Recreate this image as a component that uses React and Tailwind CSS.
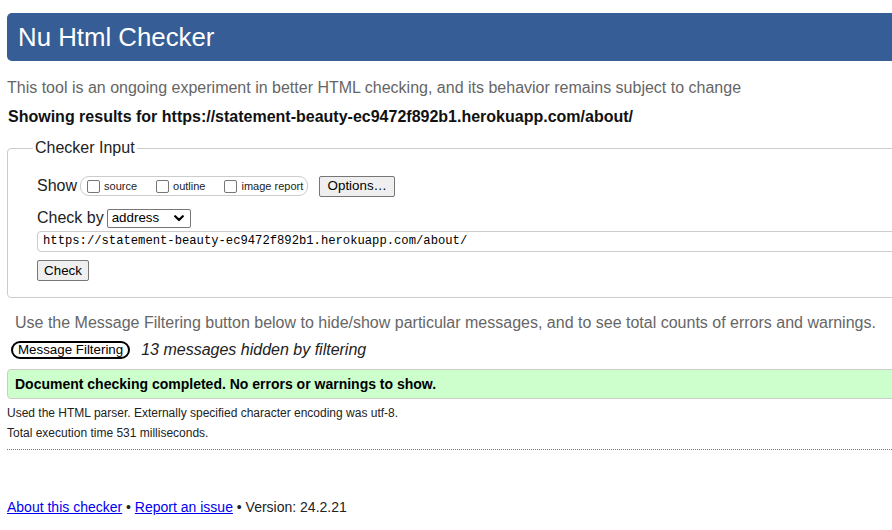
import React from "react";

/* -------------------------------------------------------------------------- */
/*  Small form pieces, drawn by hand so they look like the browser defaults   */
/* -------------------------------------------------------------------------- */

function Box() {
  return (
    <span className="inline-block h-[13px] w-[13px] shrink-0 rounded-[2px] border border-[#767676] bg-white" />
  );
}

function ShowOption({ label, last = false }) {
  return (
    <label className={`flex items-center ${last ? "" : "mr-[19px]"}`}>
      <Box />
      <span className="ml-[4px] text-[11px] leading-[13px] text-[#222]">{label}</span>
    </label>
  );
}

function NativeButton({ children, className = "" }) {
  return (
    <button
      type="button"
      className={`flex items-center justify-center rounded-[2px] border border-[#767676] bg-[#efefef] text-[13.33px] text-black ${className}`}
    >
      {children}
    </button>
  );
}

function Chevron() {
  return (
    <svg width="10" height="7" viewBox="0 0 10 7" fill="none">
      <path d="M1.2 1.2 5 5 8.8 1.2" stroke="#000" strokeWidth="2.2" strokeLinecap="round" strokeLinejoin="round" />
    </svg>
  );
}

/* -------------------------------------------------------------------------- */
/*  App                                                                       */
/* -------------------------------------------------------------------------- */

export default function App() {
  return (
    <div className="h-[530px] w-[892px] overflow-hidden bg-white">
      <div
        className="w-[1000px] pl-[7px] pt-[13px] text-[#222]"
        style={{ fontFamily: '"Liberation Sans", Arial, sans-serif' }}
      >
        {/* Header bar */}
        <header className="flex h-[48px] items-center rounded-l-[5px] bg-[#365d95] pl-[11px]">
          <h1 className="text-[25.8px] leading-[30px] font-normal text-white">Nu Html Checker</h1>
        </header>

        <p className="mt-[17px] text-[16px] leading-[20px] text-[#666]">
          This tool is an ongoing experiment in better HTML checking, and its behavior remains subject to change
        </p>

        <p className="mt-[9px] pl-[1px] text-[16px] leading-[20px] font-bold text-[#111]">
          Showing results for https://statement-beauty-ec9472f892b1.herokuapp.com/about/
        </p>

        {/* Checker input */}
        <fieldset className="mt-[11px] rounded-l-[4px] border border-[#ccc] pb-[16px] pl-[29px]">
          <legend className="-ml-[4px] px-[2px] text-[16px] leading-[20px] text-[#222]">Checker Input</legend>

          <div className="pt-[17px]">
            <div className="flex h-[22px] items-center">
              <span className="text-[16px] leading-[20px]">Show</span>
              <div className="ml-[3px] flex h-[20px] items-center rounded-[9px] border border-[#ccc] pl-[6px] pr-[4px]">
                <ShowOption label="source" />
                <ShowOption label="outline" />
                <ShowOption label="image report" last />
              </div>
              <NativeButton className="ml-[11px] h-[21px] w-[76px]">Options…</NativeButton>
            </div>

            <div className="mt-[11px] flex h-[20px] items-center">
              <span className="text-[16px] leading-[20px]">Check by</span>
              <div className="ml-[3px] flex h-[19px] w-[84px] items-center justify-between rounded-[2px] border border-[#767676] bg-white pl-[4px] pr-[6px] text-[13.33px] text-black">
                <span>address</span>
                <Chevron />
              </div>
            </div>

            <div
              className="mt-[3px] flex h-[21px] items-center rounded-l-[4px] border border-[#ccc] pl-[5px] text-[12.2px] text-black"
              style={{ fontFamily: '"Liberation Mono", "DejaVu Sans Mono", monospace' }}
            >
              https://statement-beauty-ec9472f892b1.herokuapp.com/about/
            </div>

            <NativeButton className="mt-[8px] h-[21px] w-[52px]">Check</NativeButton>
          </div>
        </fieldset>

        <p className="mt-[15px] pl-[8px] text-[16px] leading-[20px] text-[#666]">
          Use the Message Filtering button below to hide/show particular messages, and to see total counts of errors and warnings.
        </p>

        <div className="mt-[7px] flex h-[20px] items-center">
          <button
            type="button"
            className="ml-[4px] flex h-[18px] items-center rounded-full border-2 border-black px-[5px] text-[13.33px] leading-[14px] text-black"
          >
            Message Filtering
          </button>
          <span className="ml-[11px] text-[16px] leading-[20px] italic text-[#222]">
            13 messages hidden by filtering
          </span>
        </div>

        {/* Result banner */}
        <div className="mt-[9px] flex h-[30px] items-center rounded-l-[4px] border border-[#ccc] bg-[#ccffcc] pl-[7px]">
          <span className="text-[14px] font-bold text-black">
            Document checking completed. No errors or warnings to show.
          </span>
        </div>

        <p className="mt-[6px] text-[12px] leading-[16px] text-[#222]">
          Used the HTML parser. Externally specified character encoding was utf-8.
        </p>
        <p className="mt-[4px] text-[12px] leading-[16px] text-[#222]">
          Total execution time 531 milliseconds.
        </p>

        <div className="mt-[8px] border-t border-dotted border-[#777]" />

        <footer className="mt-[48px] text-[14px] leading-[18px] text-[#222]">
          <a href="#" className="text-[#0000ee] underline">About this checker</a>
          {" • "}
          <a href="#" className="text-[#0000ee] underline">Report an issue</a>
          {" • Version: 24.2.21"}
        </footer>
      </div>
    </div>
  );
}
